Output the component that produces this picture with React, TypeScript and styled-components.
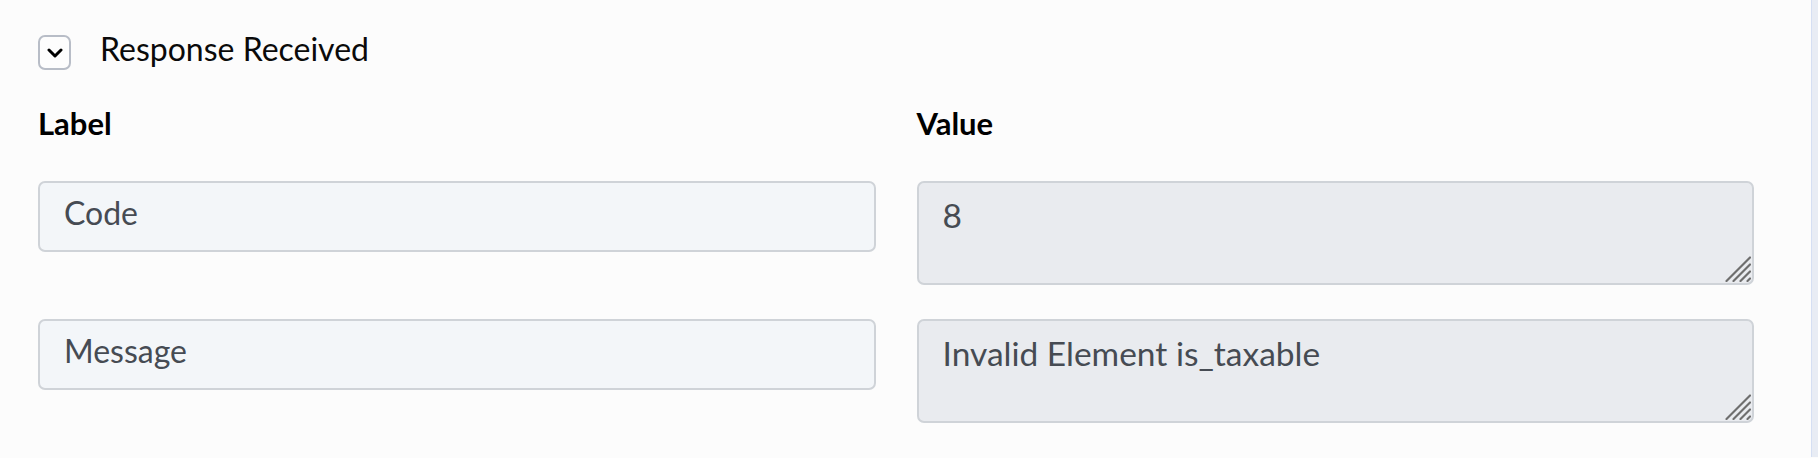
import React from "react";
import styled, { createGlobalStyle } from "styled-components";

const GlobalStyle = createGlobalStyle`
  html, body {
    margin: 0;
    padding: 0;
    background: #fcfcfc;
  }
  body {
    font-family: Lato, "Noto Sans", "Liberation Sans", sans-serif;
    color: #000;
  }
  * { box-sizing: border-box; }
`;

const Page = styled.div`
  display: flex;
  width: 100%;
  height: 458px;
  background: #fcfcfc;
`;

const Main = styled.main`
  flex: 1;
  padding: 35px 57px 0 38px;
`;

const ScrollTrack = styled.div`
  width: 7px;
  height: 457px;
  background: #e8ecf4;
  border-left: 1px solid #d5dff3;
`;

const Header = styled.div`
  display: flex;
  align-items: flex-start;
  gap: 29px;
  height: 35px;
`;

const ToggleButton = styled.button`
  flex: none;
  width: 33px;
  height: 35px;
  padding: 1px 0 0 0;
  display: flex;
  align-items: center;
  justify-content: center;
  background: #fdfdfd;
  border: 2px solid #b8bdc7;
  border-radius: 7px;
  cursor: pointer;
`;

const Title = styled.h2`
  margin: -4px 0 0 0;
  font-size: 32px;
  font-weight: 400;
  line-height: 35px;
  color: #0a0a0a;
`;

const Grid = styled.div`
  display: grid;
  grid-template-columns: 1fr 1fr;
  column-gap: 41px;
  row-gap: 34px;
  align-items: start;
`;

const ColumnHeading = styled.div`
  margin-top: 35px;
  margin-bottom: 6px;
  font-size: 31px;
  font-weight: 700;
  line-height: 36px;
  color: #000;
`;

const fieldBase = `
  width: 100%;
  border: 2px solid #cfd3d8;
  border-radius: 7px;
  font-family: Lato, "Noto Sans", "Liberation Sans", sans-serif;
  color: #464b53;
  outline: none;
`;

const LabelInput = styled.input`
  ${fieldBase}
  height: 71px;
  font-size: 32px;
  padding: 0 24px 9px 24px;
  background: #f3f6f9;
`;

const AreaWrap = styled.div`
  position: relative;
  width: 100%;
  height: 104px;
`;

const ValueArea = styled.textarea`
  ${fieldBase}
  display: block;
  height: 104px;
  font-size: 33.5px;
  padding: 12px 24px 0 24px;
  line-height: 40px;
  background: #e9ebef;
  resize: none;
`;

const Grip = styled.svg`
  position: absolute;
  right: 3px;
  bottom: 3px;
  pointer-events: none;
`;

const ResizeGrip = () => (
  <Grip width="26" height="26" viewBox="0 0 26 26">
    <g stroke="#6e6e6e" strokeWidth="2.2" strokeLinecap="round">
      <line x1="1.5" y1="25" x2="25" y2="1.5" />
      <line x1="8.5" y1="25" x2="25" y2="8.5" />
      <line x1="15.5" y1="25" x2="25" y2="15.5" />
      <line x1="22.5" y1="25" x2="25" y2="22.5" />
    </g>
  </Grip>
);

const rows = [
  { label: "Code", value: "8" },
  { label: "Message", value: "Invalid Element is_taxable" },
];

export default function App() {
  return (
    <>
      <GlobalStyle />
      <Page>
        <Main>
          <Header>
            <ToggleButton aria-label="Collapse">
              <svg width="16" height="10" viewBox="0 0 16 10">
                <path
                  d="M2 2 L8 8 L14 2"
                  fill="none"
                  stroke="#000"
                  strokeWidth="3"
                  strokeLinecap="round"
                  strokeLinejoin="round"
                />
              </svg>
            </ToggleButton>
            <Title>Response Received</Title>
          </Header>
          <Grid>
            <ColumnHeading>Label</ColumnHeading>
            <ColumnHeading>Value</ColumnHeading>
            {rows.map((r) => (
              <React.Fragment key={r.label}>
                <LabelInput readOnly value={r.label} />
                <AreaWrap>
                  <ValueArea readOnly value={r.value} />
                  <ResizeGrip />
                </AreaWrap>
              </React.Fragment>
            ))}
          </Grid>
        </Main>
        <ScrollTrack />
      </Page>
    </>
  );
}
